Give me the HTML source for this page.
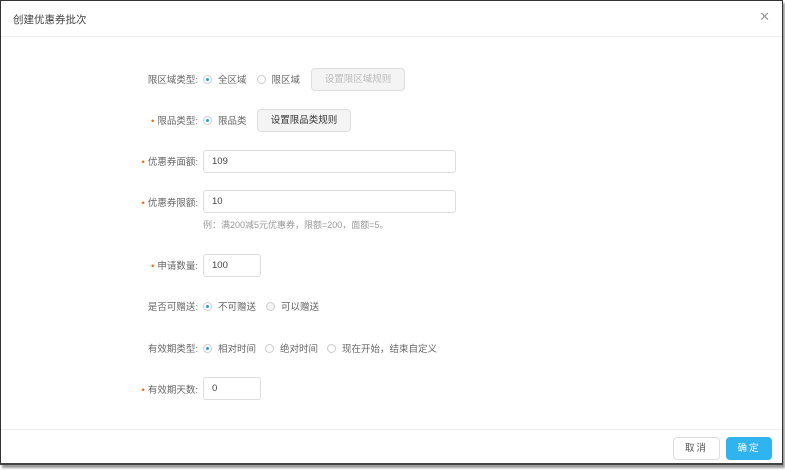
<!DOCTYPE html><html><head><meta charset="utf-8"><style>
body{margin:0;width:785px;height:470px;background:#fff;font-family:"Liberation Sans","Noto Sans CJK SC",sans-serif;font-size:9.5px;color:#666;position:relative;overflow:hidden}
.dlg{position:absolute;left:0;top:0;width:781px;height:462px;border:1px solid #333;border-bottom:2px solid #444;box-shadow:2px 3px 2px #999}
.hd{position:absolute;left:0;top:0;right:0;height:35px;border-bottom:1px solid #eee}
.hd span{position:absolute;left:12px;top:11px;font-size:10.5px;color:#444}
.x{position:absolute;right:12px;top:8px;font-size:13px;color:#999}
.lab{position:absolute;right:584px;width:120px;text-align:right}
.st{color:#f60;margin-right:3px}
.r{position:absolute;display:flex;align-items:center}
.rad{width:9px;height:9px;border:1px solid #ccc;border-radius:50%;margin-right:6px;box-sizing:border-box;display:inline-block;position:relative}
.rad.on:after{content:"";position:absolute;left:2px;top:2px;width:3px;height:3px;border-radius:50%;background:#1e9fe9}
.opt{margin-right:9px;display:flex;align-items:center}
.btn{position:absolute;border:1px solid #ddd;border-radius:4px;background:#f4f4f4;text-align:center;box-sizing:border-box}
.inp{position:absolute;left:202px;border:1px solid #ddd;border-radius:3px;height:23px;box-sizing:border-box;padding:5px 0 0 8px;color:#444}
.ft{position:absolute;left:0;right:0;top:428px;border-top:1px solid #eee}
</style></head><body><div class="dlg">
<div class="hd"><span>创建优惠券批次</span><div class="x">✕</div></div>
<div class="lab" style="top:71px">限区域类型:</div>
<div class="r" style="left:202px;top:71px"><span class="opt"><i class="rad on"></i>全区域</span><span class="opt" style="margin-left:1px"><i class="rad"></i>限区域</span></div>
<div class="btn" style="left:310px;top:67px;width:94px;height:23px;line-height:21px;color:#bbb">设置限区域规则</div>
<div class="lab" style="top:112px"><span class="st">•</span>限品类型:</div>
<div class="r" style="left:202px;top:112px"><span class="opt"><i class="rad on"></i>限品类</span></div>
<div class="btn" style="left:256px;top:108px;width:94px;height:23px;line-height:21px;color:#333">设置限品类规则</div>
<div class="lab" style="top:153px"><span class="st">•</span>优惠券面额:</div>
<div class="inp" style="top:149px;width:253px">109</div>
<div class="lab" style="top:194px"><span class="st">•</span>优惠券限额:</div>
<div class="inp" style="top:189px;width:253px">10</div>
<div style="position:absolute;left:202px;top:217px;color:#999;font-size:9px">例：满200减5元优惠券，限额=200，面额=5。</div>
<div class="lab" style="top:257px"><span class="st">•</span>申请数量:</div>
<div class="inp" style="top:253px;width:58px">100</div>
<div class="lab" style="top:298px">是否可赠送:</div>
<div class="r" style="left:202px;top:298px"><span class="opt"><i class="rad on"></i>不可赠送</span><span class="opt" style="margin-left:1px"><i class="rad" style="background:#f4f4f4"></i>可以赠送</span></div>
<div class="lab" style="top:340px">有效期类型:</div>
<div class="r" style="left:202px;top:340px"><span class="opt"><i class="rad on"></i>相对时间</span><span class="opt"><i class="rad"></i>绝对时间</span><span class="opt"><i class="rad"></i>现在开始，结束自定义</span></div>
<div class="lab" style="top:381px"><span class="st">•</span>有效期天数:</div>
<div class="inp" style="top:376px;width:58px">0</div>
<div class="ft"></div>
<div class="btn" style="left:672px;top:436px;width:47px;height:23px;line-height:21px;background:#fff;color:#555;letter-spacing:2px">取消</div>
<div class="btn" style="left:725px;top:436px;width:46px;height:23px;line-height:21px;background:#2fb4f0;border-color:#2fb4f0;color:#fff;letter-spacing:2px">确定</div>
</div></body></html>
